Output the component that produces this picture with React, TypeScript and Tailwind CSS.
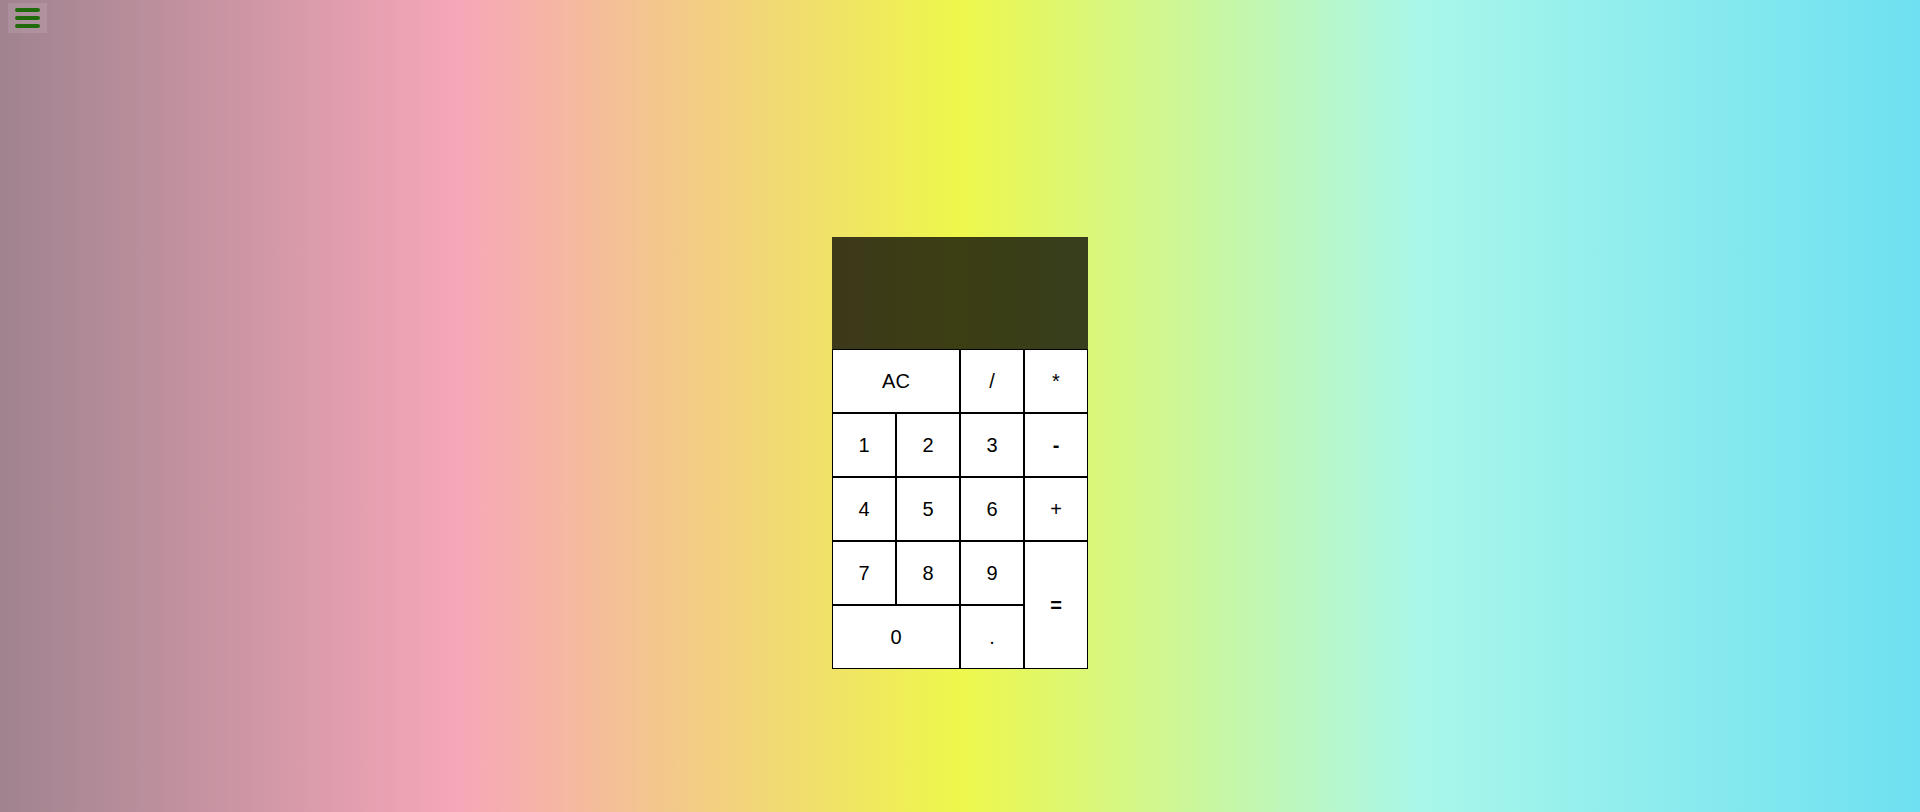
import React, { useState } from 'react';

// calculator: display on top, 4-column key grid below
type Key = { label: string; value: string; span?: string; bold?: boolean };

const keys: Key[] = [
  { label: 'AC', value: 'AC', span: 'col-span-2' },
  { label: '/', value: '/' },
  { label: '*', value: '*' },
  { label: '1', value: '1' },
  { label: '2', value: '2' },
  { label: '3', value: '3' },
  { label: '-', value: '-', bold: true },
  { label: '4', value: '4' },
  { label: '5', value: '5' },
  { label: '6', value: '6' },
  { label: '+', value: '+' },
  { label: '7', value: '7' },
  { label: '8', value: '8' },
  { label: '9', value: '9' },
  { label: '=', value: '=', span: 'row-span-2', bold: true },
  { label: '0', value: '0', span: 'col-span-2' },
  { label: '.', value: '.' },
];

export default function App() {
  const [expr, setExpr] = useState('');

  const press = (v: string) => {
    if (v === 'AC') return setExpr('');
    if (v === '=') {
      try {
        // eslint-disable-next-line no-new-func
        setExpr(String(Function(`return (${expr || 0})`)()));
      } catch {
        setExpr('');
      }
      return;
    }
    setExpr((e) => e + v);
  };

  return (
    <div
      className="relative min-h-[812px] w-full bg-[linear-gradient(90deg,#9f838f_0%,#f7a7b8_24%,#eef74b_50%,#a9f7ea_74%,#6ee0f1_100%)] font-['Liberation_Sans',Arial,sans-serif]"
    >
      <button className="absolute left-2 top-[3px] flex h-[30px] w-[39px] flex-col items-center justify-center gap-1 bg-white/10">
        <span className="h-1 w-[25px] rounded-full bg-[#1f6a0a]" />
        <span className="h-1 w-[25px] rounded-full bg-[#1f6a0a]" />
        <span className="h-1 w-[25px] rounded-full bg-[#1f6a0a]" />
      </button>

      <div className="flex justify-center pt-[237px]">
        <div className="w-64">
          <div className="flex h-[112px] items-end justify-end bg-black/75 px-3 pb-2 text-3xl text-white">
            {expr}
          </div>
          <div className="grid grid-cols-4 auto-rows-[64px]">
            {keys.map((k) => (
              <button
                key={k.label}
                onClick={() => press(k.value)}
                className={`flex items-center justify-center border border-black bg-white text-[20px] text-black ${
                  k.span ?? ''
                } ${k.bold ? 'font-bold' : ''}`}
              >
                {k.label}
              </button>
            ))}
          </div>
        </div>
      </div>
    </div>
  );
}
